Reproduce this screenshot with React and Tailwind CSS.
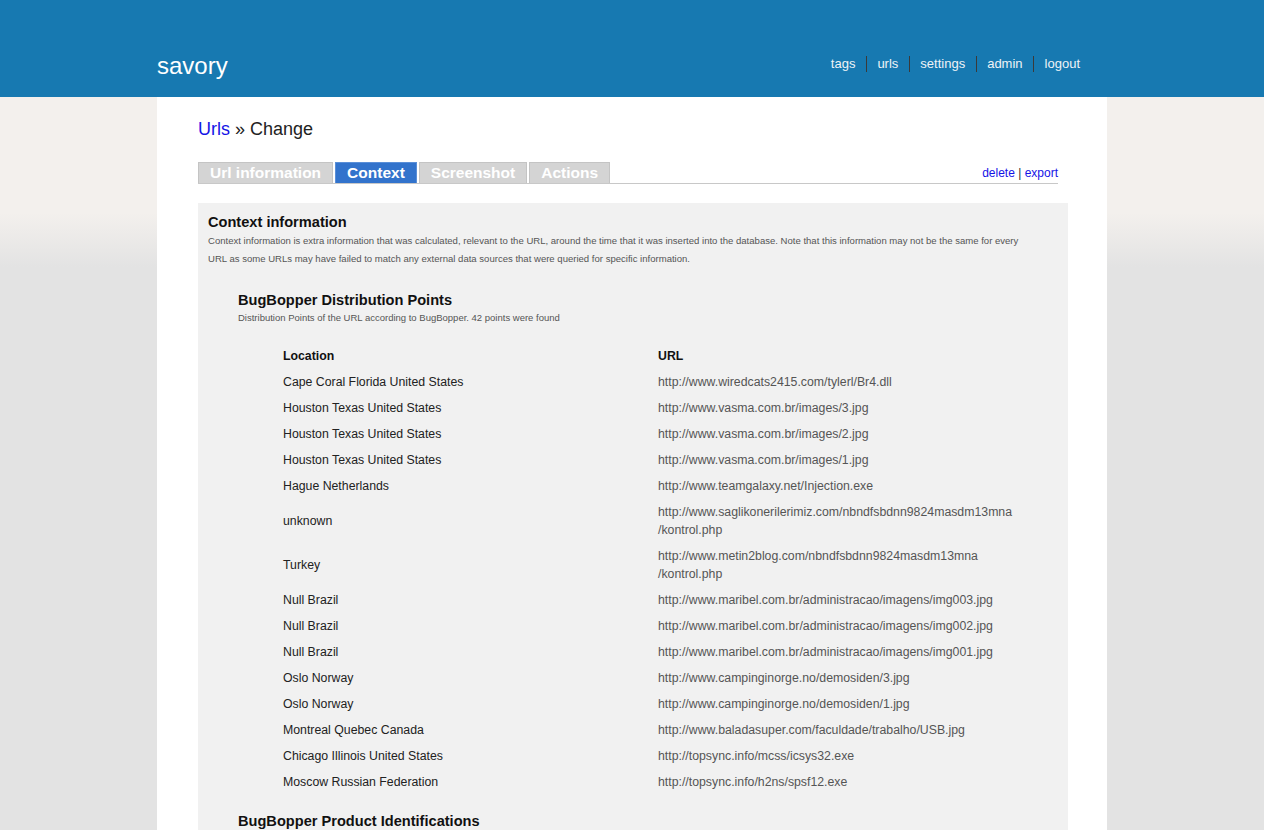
import React from 'react'

const nav = ['tags', 'urls', 'settings', 'admin', 'logout']
const tabs = ['Url information', 'Context', 'Screenshot', 'Actions']

const points = [
    ['Cape Coral Florida United States', ['http://www.wiredcats2415.com/tylerl/Br4.dll']],
    ['Houston Texas United States', ['http://www.vasma.com.br/images/3.jpg']],
    ['Houston Texas United States', ['http://www.vasma.com.br/images/2.jpg']],
    ['Houston Texas United States', ['http://www.vasma.com.br/images/1.jpg']],
    ['Hague Netherlands', ['http://www.teamgalaxy.net/Injection.exe']],
    ['unknown', ['http://www.saglikonerilerimiz.com/nbndfsbdnn9824masdm13mna', '/kontrol.php']],
    ['Turkey', ['http://www.metin2blog.com/nbndfsbdnn9824masdm13mna', '/kontrol.php']],
    ['Null Brazil', ['http://www.maribel.com.br/administracao/imagens/img003.jpg']],
    ['Null Brazil', ['http://www.maribel.com.br/administracao/imagens/img002.jpg']],
    ['Null Brazil', ['http://www.maribel.com.br/administracao/imagens/img001.jpg']],
    ['Oslo Norway', ['http://www.campinginorge.no/demosiden/3.jpg']],
    ['Oslo Norway', ['http://www.campinginorge.no/demosiden/1.jpg']],
    ['Montreal Quebec Canada', ['http://www.baladasuper.com/faculdade/trabalho/USB.jpg']],
    ['Chicago Illinois United States', ['http://topsync.info/mcss/icsys32.exe']],
    ['Moscow Russian Federation', ['http://topsync.info/h2ns/spsf12.exe']],
]

function Section({ title, subtitle, rows, heads }) {
    return (
        <div className="pl-[30px]">
            <h3 className="text-[14.6px] leading-[18px] font-bold text-[#111]">{title}</h3>
            <p className="text-[9.5px] leading-[18px] text-[#555]">{subtitle}</p>
            <table className="mt-[16px] ml-[45px] w-[740px] border-collapse text-[12.3px] leading-[18px]">
                <thead>
                    <tr>
                        <th className="w-[375px] py-1 text-left font-bold text-[#111]">{heads[0]}</th>
                        <th className="py-1 text-left font-bold text-[#111]">{heads[1]}</th>
                    </tr>
                </thead>
                <tbody>
                    {rows.map((r, i) => (
                        <tr key={i}>
                            <td className="py-1 align-middle text-[#222]">{r[0]}</td>
                            <td className="py-1 align-middle text-[#555]">
                                {r[1].map((line, j) => (
                                    <div key={j}>{line}</div>
                                ))}
                            </td>
                        </tr>
                    ))}
                </tbody>
            </table>
        </div>
    )
}

export default function App() {
    return (
        <div className="min-h-screen font-['Liberation_Sans',Arial,sans-serif] bg-[linear-gradient(to_bottom,#1779b1_97px,#f3f0ed_97px,#f3f0ed_213px,#e3e3e3_267px)]">
            <header className="h-[97px] bg-[#1779b1]">
                <div className="mx-auto flex w-[950px] items-start justify-between pt-[51px]">
                    <div className="text-[24px] leading-[30px] text-white">savory</div>
                    <nav className="mt-[5px] mr-[27px] flex">
                        {nav.map((n, i) => (
                            <a
                                key={n}
                                href="#"
                                className={
                                    'text-[13px] leading-[16px] text-[#eef3f7] ' +
                                    (i > 0 ? 'border-l border-[#3a3a3a] pl-[10.5px] ' : '') +
                                    (i < nav.length - 1 ? 'pr-[10.5px]' : '')
                                }
                            >
                                {n}
                            </a>
                        ))}
                    </nav>
                </div>
            </header>

            <main className="mx-auto min-h-[733px] w-[950px] bg-white pl-[41px] pr-[39px] pt-[21px]">
                <h1 className="text-[18px] leading-[22px] text-[#222]">
                    <a href="#" className="text-[#1414e6]">Urls</a> &raquo; Change
                </h1>

                <div className="mt-[22px] mr-[10px] flex items-end justify-between border-b border-[#c8c8c8]">
                    <div className="flex gap-[2px]">
                        {tabs.map(t => (
                            <span
                                key={t}
                                className={
                                    t === 'Context'
                                        ? 'border border-b-0 border-[#5a8fd8] bg-[#3273cc] px-[11px] text-[15.5px] leading-[20px] font-bold text-white'
                                        : 'border border-b-0 border-[#c4c4c4] bg-[#d4d4d4] px-[11px] text-[15.5px] leading-[20px] font-bold text-white'
                                }
                            >
                                {t}
                            </span>
                        ))}
                    </div>
                    <div className="pb-[3px] text-[12px] leading-[14px] text-[#333]">
                        <a href="#" className="text-[#1414e6]">delete</a> | <a href="#" className="text-[#1414e6]">export</a>
                    </div>
                </div>

                <div className="mt-[19px] bg-[#f1f1f1] px-[10px] pt-[10px] pb-[30px]">
                    <h2 className="text-[14.6px] leading-[18px] font-bold text-[#111]">Context information</h2>
                    <p className="mt-px text-[9.55px] leading-[18px] text-[#555]">
                        Context information is extra information that was calculated, relevant to the URL, around the time that it was inserted into the database. Note that this information may not be the same for every
                        <br />
                        URL as some URLs may have failed to match any external data sources that were queried for specific information.
                    </p>

                    <div className="mt-[23px]">
                        <Section
                            title="BugBopper Distribution Points"
                            subtitle="Distribution Points of the URL according to BugBopper. 42 points were found"
                            heads={['Location', 'URL']}
                            rows={points}
                        />
                    </div>

                    <div className="mt-[17px]">
                        <Section
                            title="BugBopper Product Identifications"
                            subtitle="Products identified at the URL according to BugBopper. 2 products were found"
                            heads={['Product', 'Version']}
                            rows={[
                                ['Trojan.Generic', ['unknown']],
                                ['Downloader.Agent', ['unknown']],
                            ]}
                        />
                    </div>
                </div>
            </main>
        </div>
    )
}
